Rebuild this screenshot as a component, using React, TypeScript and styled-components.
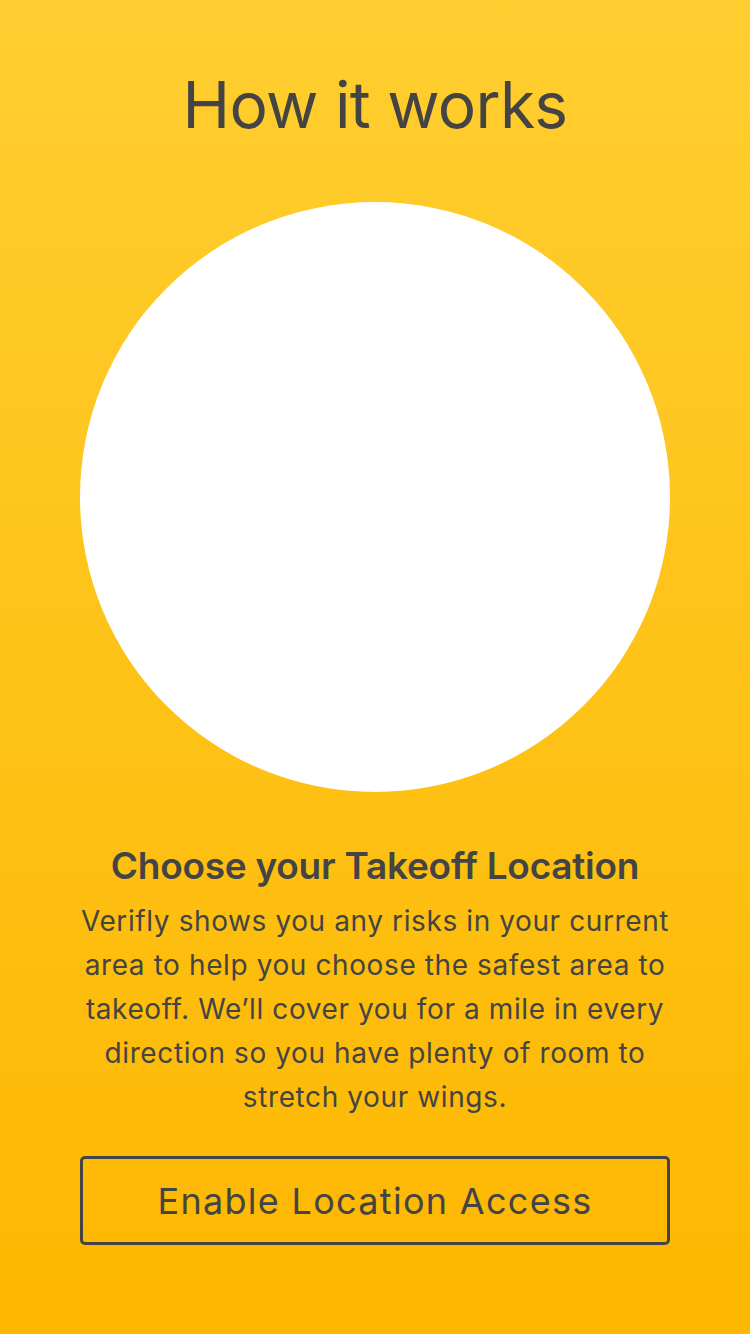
import React from "react";
import styled, { createGlobalStyle } from "styled-components";

const Global = createGlobalStyle`
  html, body { margin: 0; padding: 0; }
  body { font-family: Inter, "Noto Sans", sans-serif; }
  * { box-sizing: border-box; }
`;

const Screen = styled.div`
  width: 750px;
  height: 1334px;
  background: linear-gradient(180deg, #ffce30 0%, #fdb700 100%);
  display: flex;
  flex-direction: column;
  align-items: center;
  padding-top: 67px;
  color: #444444;
  overflow: hidden;
`;

const Title = styled.h1`
  margin: 0;
  font-size: 64px;
  line-height: 76px;
  font-weight: 400;
  letter-spacing: -0.7px;
`;

const Illustration = styled.div`
  margin-top: 59px;
  width: 590px;
  height: 590px;
  border-radius: 50%;
  background: #ffffff;
  flex-shrink: 0;
`;

const Subtitle = styled.h2`
  margin: 52px 0 0;
  font-size: 37px;
  line-height: 44px;
  font-weight: 600;
  letter-spacing: -0.25px;
`;

const Body = styled.p`
  margin: 11px 0 0;
  width: 620px;
  text-align: center;
  font-size: 28px;
  line-height: 44px;
  font-weight: 400;
  letter-spacing: 0.6px;
`;

const OutlineButton = styled.button`
  margin-top: 37px;
  width: 590px;
  height: 89px;
  padding: 0;
  border: 3px solid #444444;
  border-radius: 5px;
  background: transparent;
  color: #444444;
  font-family: Inter, "Noto Sans", sans-serif;
  font-size: 36px;
  font-weight: 400;
  letter-spacing: 1.3px;
  cursor: pointer;
`;

export default function App() {
  return (
    <>
      <Global />
      <Screen>
        <Title>How it works</Title>
        <Illustration />
        <Subtitle>Choose your Takeoff Location</Subtitle>
        <Body>
          Verifly shows you any risks in your current area to help you choose the
          safest area to takeoff. We’ll cover you for a mile in every direction so
          you have plenty of room to stretch your wings.
        </Body>
        <OutlineButton>Enable Location Access</OutlineButton>
      </Screen>
    </>
  );
}
